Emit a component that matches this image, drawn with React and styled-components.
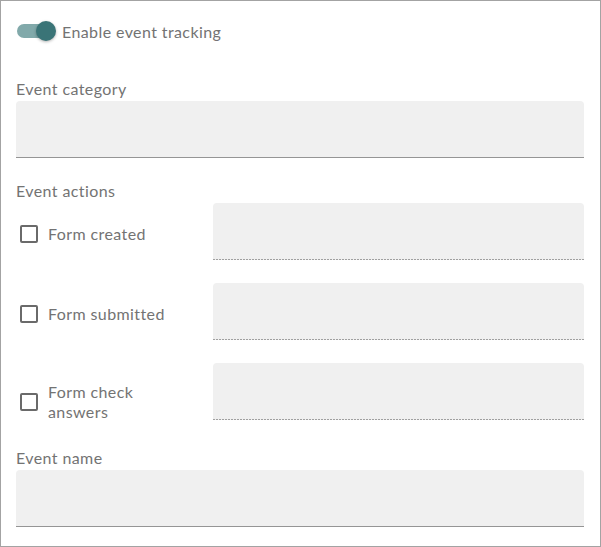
import React, { useState } from "react";
import styled, { createGlobalStyle } from "styled-components";

const GlobalStyle = createGlobalStyle`
  html, body {
    margin: 0;
    padding: 0;
    background: #fff;
  }
  * {
    box-sizing: border-box;
  }
`;

const Panel = styled.div`
  width: 601px;
  height: 547px;
  border: 1px solid #a3a3a3;
  padding: 20px 16px 0 15px;
  font-family: "Lato", "Open Sans", sans-serif;
  font-size: 16px;
  letter-spacing: 0.4px;
  color: #737373;
`;

const ToggleRow = styled.label`
  display: flex;
  align-items: center;
  gap: 6px;
  height: 20px;
  cursor: pointer;
  margin-bottom: 38px;
`;

const Track = styled.span`
  position: relative;
  display: block;
  width: 36px;
  height: 14px;
  margin-left: 1px;
  margin-right: 3px;
  border-radius: 7px;
  background: ${(p) => (p.$on ? "#81a9aa" : "#c4c4c4")};
`;

const Thumb = styled.span`
  position: absolute;
  top: -3px;
  left: ${(p) => (p.$on ? "19px" : "-3px")};
  width: 20px;
  height: 20px;
  border-radius: 50%;
  background: ${(p) => (p.$on ? "#3a7477" : "#f5f5f5")};
  box-shadow: 0 1px 3px rgba(0, 0, 0, 0.3);
`;

const FieldLabel = styled.div`
  line-height: 20px;
  margin-bottom: 2px;
`;

const FieldGroup = styled.div`
  margin-bottom: ${(p) => p.$mb || 0}px;
`;

const Input = styled.input`
  display: block;
  width: 100%;
  height: 57px;
  border: none;
  border-radius: 4px 4px 0 0;
  outline: none;
  padding: 0 12px;
  font: inherit;
  color: #333;
  background: #f0f0f0;
  border-bottom: 1px solid #959595;
`;

const DottedInput = styled(Input)`
  border-bottom: none;
  background:
    linear-gradient(to right, #a0a0a0 2px, transparent 2px) left bottom / 3px 1px repeat-x,
    #f0f0f0;
`;

const ActionList = styled.div`
  display: flex;
  flex-direction: column;
  gap: 23px;
  margin-bottom: 26px;
`;

const ActionRow = styled.div`
  display: grid;
  grid-template-columns: 197px 1fr;
  align-items: start;
`;

const CheckLabel = styled.label`
  display: flex;
  align-items: center;
  gap: 10px;
  padding-top: ${(p) => (p.$multi ? 19 : 21)}px;
  padding-left: 4px;
  cursor: pointer;
`;

const Box = styled.span`
  flex: 0 0 18px;
  width: 18px;
  height: 18px;
  border: 2px solid #6a6a6a;
  border-radius: 2px;
  background: ${(p) => (p.$checked ? "#3a7477" : "transparent")};
`;

const CheckText = styled.span`
  line-height: 20px;
  max-width: 130px;
`;

const actions = ["Form created", "Form submitted", "Form check answers"];

export default function App() {
  const [on, setOn] = useState(true);
  const [checked, setChecked] = useState({});

  return (
    <>
      <GlobalStyle />
      <Panel>
        <ToggleRow onClick={() => setOn(!on)}>
          <Track $on={on}>
            <Thumb $on={on} />
          </Track>
          <span>Enable event tracking</span>
        </ToggleRow>

        <FieldGroup $mb={23}>
          <FieldLabel>Event category</FieldLabel>
          <Input />
        </FieldGroup>

        <FieldLabel>Event actions</FieldLabel>
        <ActionList>
          {actions.map((a, i) => (
            <ActionRow key={a}>
              <CheckLabel
                $multi={i === actions.length - 1}
                onClick={() => setChecked({ ...checked, [a]: !checked[a] })}
              >
                <Box $checked={checked[a]} />
                <CheckText>{a}</CheckText>
              </CheckLabel>
              <DottedInput />
            </ActionRow>
          ))}
        </ActionList>

        <FieldGroup>
          <FieldLabel>Event name</FieldLabel>
          <Input />
        </FieldGroup>
      </Panel>
    </>
  );
}
